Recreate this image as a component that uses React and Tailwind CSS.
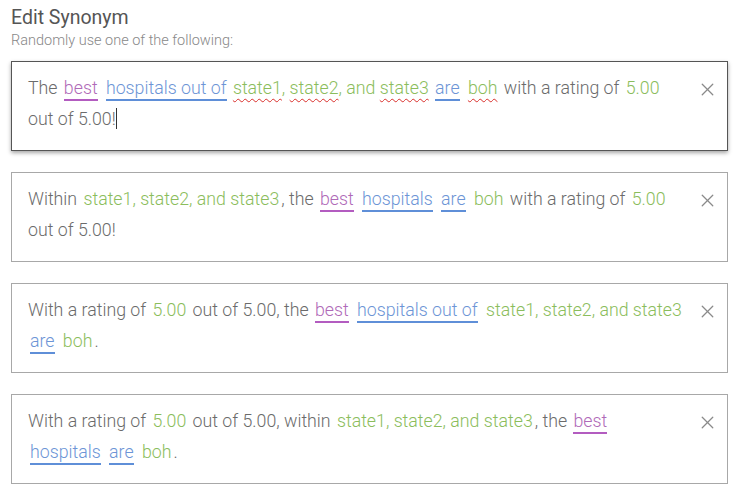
import { X } from 'lucide-react';

const TEXT = 'text-[#6b6b6b]';

function Chip({ children, tone }) {
  const colors = {
    purple: 'text-[#b06ab8] border-[#b35cc0]',
    blue: 'text-[#6d95d6] border-[#5f8fd8]',
  };
  return (
    <span className={`inline-block leading-[22px] border-b-2 mx-[2px] ${colors[tone]}`}>{children}</span>
  );
}

function Green({ children, spell, tight }) {
  const base = `text-[#8bbd5c] ${tight ? '' : 'mx-[2px]'}`;
  return spell ? (
    <span className={`${base} underline decoration-wavy decoration-[#d9302c] decoration-1 underline-offset-[4px]`}>
      {children}
    </span>
  ) : (
    <span className={base}>{children}</span>
  );
}

function Option({ active, children }) {
  return (
    <div
      className={`flex items-start h-[90px] bg-white border pl-4 pr-1 pt-[11px] ${
        active ? 'border-[#555] shadow-[0_2px_4px_rgba(0,0,0,0.35)]' : 'border-[#a8a8a8]'
      }`}
    >
      <p className={`flex-1 text-[17.75px] leading-[31px] font-light ${TEXT}`}>{children}</p>
      <button className="w-8 h-8 ml-1 flex items-center justify-center text-[#8a8a8a]">
        <X size={21} strokeWidth={1.5} />
      </button>
    </div>
  );
}

export default function App() {
  return (
    <div className="w-[739px] h-[494px] bg-white px-[11px] pt-[6px]" style={{ fontFamily: 'Roboto, "Liberation Sans", sans-serif' }}>
      <h2 className="text-[19.5px] leading-[24px] text-[#555]">Edit Synonym</h2>
      <p className="text-[14.5px] leading-[20px] font-light text-[#888] mt-[1px]">Randomly use one of the following:</p>
      <div className="flex flex-col gap-[21px] mt-[10px] w-[717px]">
        <Option active>
          The <Chip tone="purple">best</Chip> <Chip tone="blue">hospitals out of</Chip>{' '}
          <Green spell tight>state1</Green><Green tight>, </Green><Green spell tight>state2</Green>
          <Green tight>, and </Green><Green spell tight>state3</Green> <Chip tone="blue">are</Chip>{' '}
          <Green spell>boh</Green> with a rating of <Green>5.00</Green> out of 5.00!
          <span className="inline-block w-px h-[21px] bg-[#333] align-[-4px]" />
        </Option>
        <Option>
          Within <Green>state1, state2, and state3</Green>, the <Chip tone="purple">best</Chip>{' '}
          <Chip tone="blue">hospitals</Chip> <Chip tone="blue">are</Chip> <Green>boh</Green> with a rating of{' '}
          <Green>5.00</Green> out of 5.00!
        </Option>
        <Option>
          With a rating of <Green>5.00</Green> out of 5.00, the <Chip tone="purple">best</Chip>{' '}
          <Chip tone="blue">hospitals out of</Chip> <Green>state1, state2, and state3</Green>{' '}
          <Chip tone="blue">are</Chip> <Green>boh</Green>.
        </Option>
        <Option>
          With a rating of <Green>5.00</Green> out of 5.00, within <Green>state1, state2, and state3</Green>, the{' '}
          <Chip tone="purple">best</Chip> <Chip tone="blue">hospitals</Chip> <Chip tone="blue">are</Chip>{' '}
          <Green>boh</Green>.
        </Option>
      </div>
    </div>
  );
}
